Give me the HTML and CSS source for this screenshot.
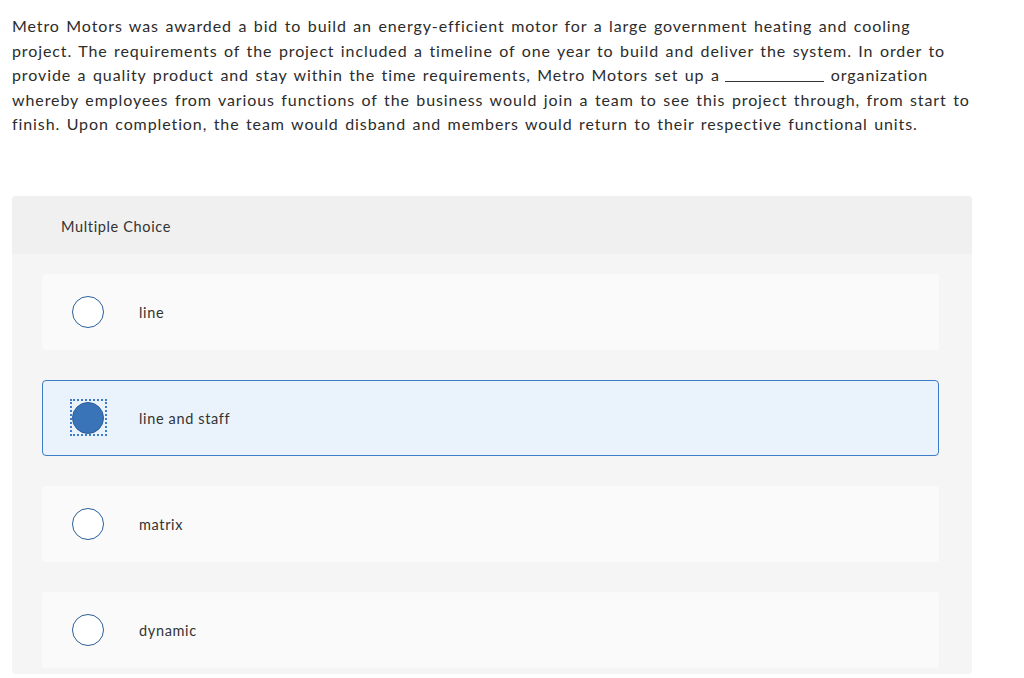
FILE: index.html
```html
<!DOCTYPE html>
<html>
<head>
<meta charset="utf-8">
<link rel="stylesheet" href="styles.css">
</head>
<body>
<div class="page">
  <p class="prompt">Metro Motors was awarded a bid to build an energy-efficient motor for a large government heating and cooling<br>project. The requirements of the project included a timeline of one year to build and deliver the system. In order to<br>provide a quality product and stay within the time requirements, Metro Motors set up a <span class="blank"></span> organization<br>whereby employees from various functions of the business would join a team to see this project through, from start to<br>finish. Upon completion, the team would disband and members would return to their respective functional units.</p>

  <div class="panel">
    <div class="panel-head">Multiple Choice</div>
    <div class="panel-body">
      <div class="option">
        <span class="radio"></span>
        <span class="label">line</span>
      </div>
      <div class="option selected">
        <span class="focus"><span class="radio checked"></span></span>
        <span class="label">line and staff</span>
      </div>
      <div class="option">
        <span class="radio"></span>
        <span class="label">matrix</span>
      </div>
      <div class="option">
        <span class="radio"></span>
        <span class="label">dynamic</span>
      </div>
    </div>
  </div>
</div>
</body>
</html>
```

FILE: styles.css
```css
html, body {
  margin: 0;
  padding: 0;
  background: #fff;
}
body {
  font-family: Lato, "Liberation Sans", sans-serif;
  color: #333;
}
.page {
  padding: 14px 0 0 12px;
  width: 960px;
}
.prompt {
  margin: 0;
  font-size: 16px;
  line-height: 24.5px;
  letter-spacing: 0.9px;
  word-spacing: 1.5px;
  color: #2c2c2c;
  width: 1010px;
  white-space: nowrap;
}
.blank {
  display: inline-block;
  width: 99px;
  margin-left: -1px;
  border-bottom: 1px solid #333;
  margin-bottom: -1px;
}
.panel {
  margin-top: 59px;
  width: 960px;
  border-radius: 4px;
  overflow: hidden;
  background: #f5f5f5;
}
.panel-head {
  background: #f0f0f0;
  height: 58px;
  box-sizing: border-box;
  padding-left: 49px;
  padding-top: 4px;
  display: flex;
  align-items: center;
  font-size: 14.5px;
  letter-spacing: 0.65px;
  color: #333;
}
.panel-body {
  padding: 20px 33px 6px 30px;
  display: flex;
  flex-direction: column;
  gap: 30px;
}
.option {
  height: 76px;
  box-sizing: border-box;
  background: #fafafa;
  border-radius: 4px;
  display: flex;
  align-items: center;
  padding-left: 29px;
  border: 1px solid transparent;
}
.option.selected {
  background: #eaf2fb;
  border-color: #3d7cc6;
}
.radio {
  width: 32px;
  height: 32px;
  box-sizing: border-box;
  border: 1.5px solid #2c5f96;
  border-radius: 50%;
  background: #fff;
  flex: none;
}
.radio.checked {
  background: #3a74b8;
  border-color: #2c5f96;
}
.focus {
  flex: none;
  width: 37px;
  height: 37px;
  box-sizing: border-box;
  margin-left: -2.5px;
  margin-right: -2.5px;
  border: 2px dotted #3d7cc6;
  display: flex;
  align-items: center;
  justify-content: center;
}
.label {
  margin-left: 35px;
  padding-top: 2px;
  font-size: 14.5px;
  letter-spacing: 0.65px;
  color: #333;
}
```
